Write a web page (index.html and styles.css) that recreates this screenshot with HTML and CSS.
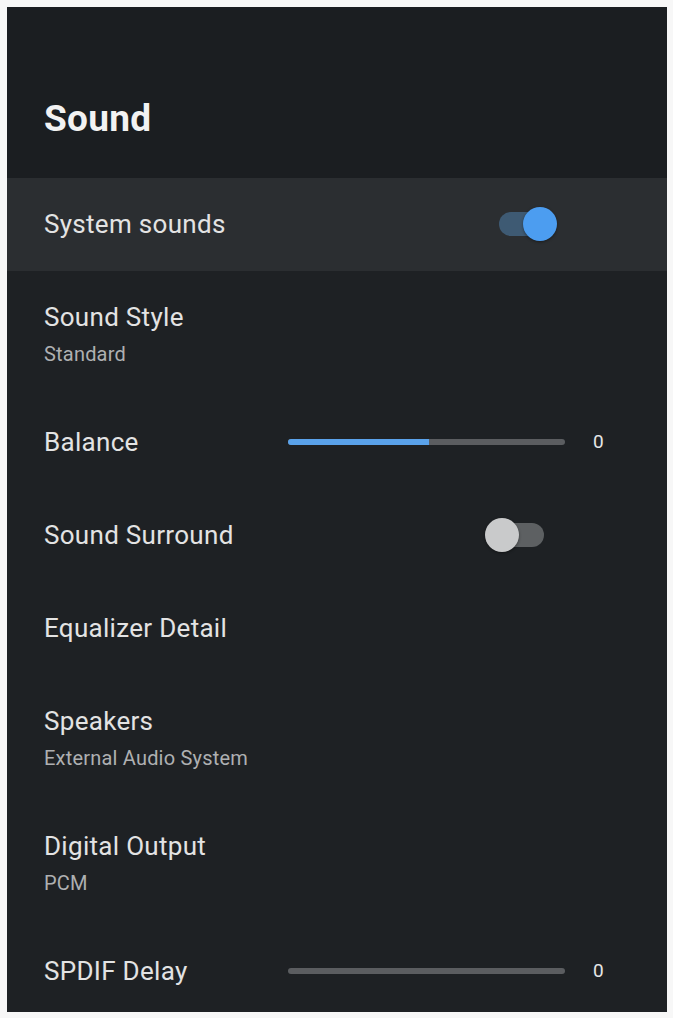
FILE: index.html
```html
<!DOCTYPE html>
<html lang="en">

<head>
    <meta charset="UTF-8">
    <meta name="viewport" content="width=device-width, initial-scale=1.0">
    <title>Sound Settings</title>
    <link rel="stylesheet" href="styles.css">
</head>

<body>
    <div class="settings-panel">
        <!-- Panel Header -->
        <div class="panel-header">
            <h1>Sound</h1>
        </div>

        <!-- Settings List -->
        <ul class="settings-list">
            <li class="setting-row focused">
                <div class="setting-text">
                    <span class="setting-title">System sounds</span>
                </div>
                <div class="switch on">
                    <span class="switch-track"></span>
                    <span class="switch-thumb"></span>
                </div>
            </li>
            <li class="setting-row">
                <div class="setting-text">
                    <span class="setting-title">Sound Style</span>
                    <span class="setting-value">Standard</span>
                </div>
            </li>
            <li class="setting-row">
                <div class="setting-text">
                    <span class="setting-title">Balance</span>
                </div>
                <div class="slider">
                    <div class="slider-track">
                        <div class="slider-fill" style="width: 51%"></div>
                    </div>
                    <span class="slider-value">0</span>
                </div>
            </li>
            <li class="setting-row">
                <div class="setting-text">
                    <span class="setting-title">Sound Surround</span>
                </div>
                <div class="switch">
                    <span class="switch-track"></span>
                    <span class="switch-thumb"></span>
                </div>
            </li>
            <li class="setting-row">
                <div class="setting-text">
                    <span class="setting-title">Equalizer Detail</span>
                </div>
            </li>
            <li class="setting-row">
                <div class="setting-text">
                    <span class="setting-title">Speakers</span>
                    <span class="setting-value">External Audio System</span>
                </div>
            </li>
            <li class="setting-row">
                <div class="setting-text">
                    <span class="setting-title">Digital Output</span>
                    <span class="setting-value">PCM</span>
                </div>
            </li>
            <li class="setting-row">
                <div class="setting-text">
                    <span class="setting-title">SPDIF Delay</span>
                </div>
                <div class="slider">
                    <div class="slider-track">
                        <div class="slider-fill" style="width: 0%"></div>
                    </div>
                    <span class="slider-value">0</span>
                </div>
            </li>
        </ul>
    </div>
</body>

</html>
```

FILE: styles.css
```css
/* General Styles */
body {
    font-family: 'Roboto', 'Liberation Sans', sans-serif;
    background-color: #f7f7f7;
    margin: 0;
    padding: 7px 6px 6px 7px;
}

.settings-panel {
    background-color: #1e2124;
    width: 660px;
    height: 1005px;
    overflow: hidden;
}

/* Header */
.panel-header {
    background-color: #1b1e21;
    height: 171px;
    padding: 93px 0 0 37px;
    box-sizing: border-box;
}

.panel-header h1 {
    margin: 0;
    font-size: 37px;
    line-height: 38px;
    font-weight: 700;
    letter-spacing: 0.3px;
    color: #f2f2f2;
}

/* Rows */
.settings-list {
    list-style: none;
    margin: 0;
    padding: 0;
}

.setting-row {
    display: flex;
    align-items: center;
    padding: 31px 0 32px 37px;
}

.setting-row.focused {
    background-color: #2b2e31;
}

.setting-text {
    display: flex;
    flex-direction: column;
    width: 244px;
    white-space: nowrap;
}

.setting-title {
    font-size: 26px;
    line-height: 30px;
    letter-spacing: 0.3px;
    color: #e3e3e3;
}

.setting-value {
    margin-top: 12px;
    font-size: 20px;
    line-height: 20px;
    color: #aeb0b2;
    letter-spacing: 0.2px;
}

/* Switch */
.switch {
    position: relative;
    width: 72px;
    height: 34px;
    margin: -2px 0 -2px 197px;
    display: flex;
    align-items: center;
    justify-content: center;
}

.switch-track {
    width: 45px;
    height: 24px;
    border-radius: 12px;
    background-color: #5d6062;
}

.switch-thumb {
    position: absolute;
    top: 0;
    left: 0;
    width: 34px;
    height: 34px;
    border-radius: 50%;
    background-color: #c9cacb;
    box-shadow: 0 1px 3px rgba(0, 0, 0, 0.4);
}

.switch.on .switch-track {
    background-color: #3e5a73;
}

.switch.on .switch-thumb {
    left: auto;
    right: 0;
    background-color: #4c9df0;
}

/* Slider */
.slider {
    display: flex;
    align-items: center;
}

.slider-track {
    width: 277px;
    height: 6px;
    border-radius: 3px;
    background-color: #5b5d60;
    overflow: hidden;
}

.slider-fill {
    height: 100%;
    background-color: #5aa2ea;
}

.slider-value {
    margin-left: 28px;
    font-size: 19px;
    line-height: 30px;
    color: #e6e6e6;
}
```
